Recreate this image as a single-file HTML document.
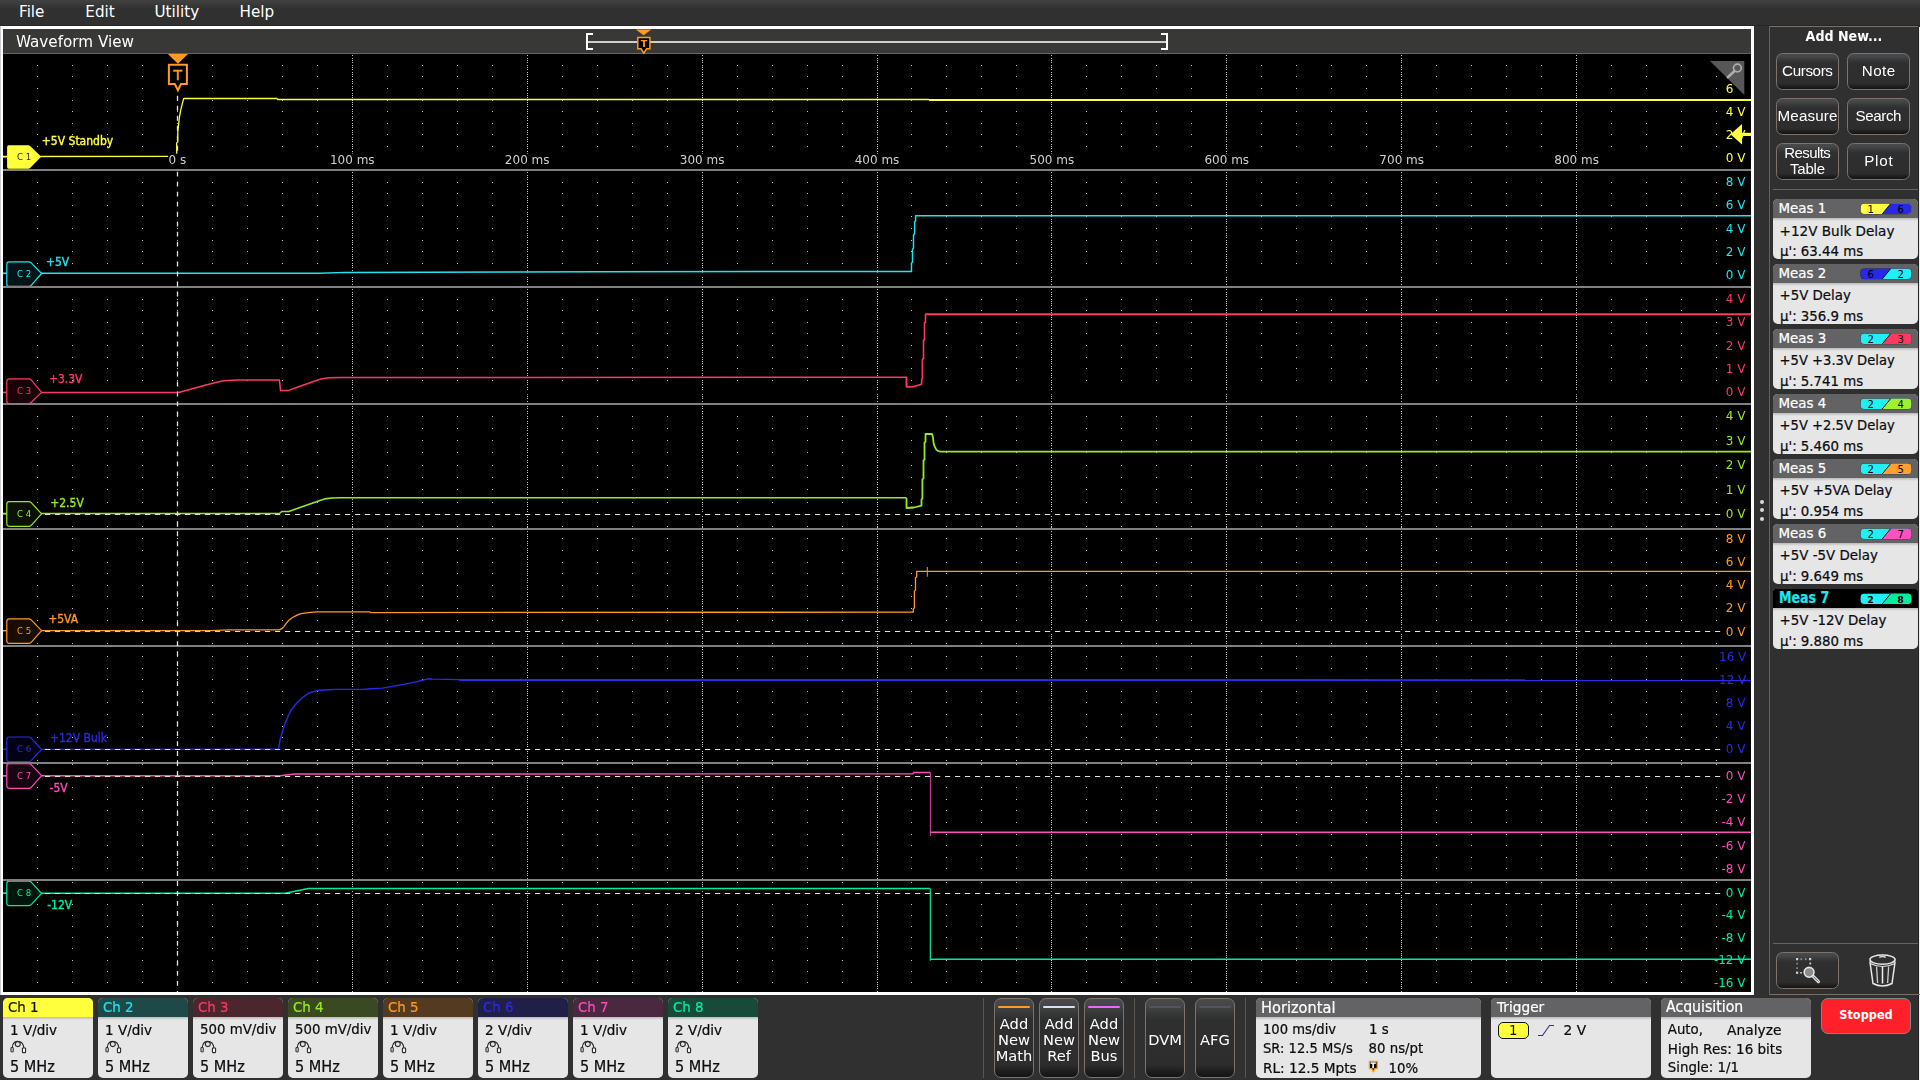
<!DOCTYPE html>
<html lang="en"><head><meta charset="utf-8"><title>Waveform View</title>
<style>

html,body{margin:0;padding:0}
body{width:1920px;height:1080px;overflow:hidden;background:#303030;font-family:"DejaVu Sans","Liberation Sans",sans-serif;position:relative;color:#fff}
.a{position:absolute}
.t{position:absolute;white-space:pre;line-height:1}
#menubar{left:0;top:0;width:1920px;height:26px;background:linear-gradient(#414141 0,#3e3e3e 2px,#363636 6px,#303030 9.5px,#303030 25px,#262626 25px,#262626 26px)}
#menubar span{position:absolute;top:3px;font-size:15.2px;line-height:18px;color:#fff}
#wvframe{left:1px;top:26px;width:1753px;height:969px;background:#fff}
#wvedge{left:0;top:26px;width:1px;height:969px;background:#c9cdd1}
#wvtitle{left:3px;top:29px;width:1748px;height:24px;background:#383837}
#wvtline{left:3px;top:53px;width:1748px;height:1px;background:#63666a}
#plot{left:3px;top:54px;width:1748px;height:938px;background:#000}
.btn{position:absolute;box-sizing:border-box;border:1px solid #7d726c;border-radius:6.5px;background:linear-gradient(#494a4c 0,#454648 8%,#38393a 17%,#2f2f2f 26%,#2d2d2d 84%,#1c1c1c 94%,#131313 100%);color:#fff;text-align:center}
.badge{position:absolute;border-radius:5px;background:#e6e6e6;overflow:hidden;color:#0c0c10}
.badge .h{position:absolute;left:0;top:0;right:0;height:19px}
.badge .sh{position:absolute;left:0;right:0;top:19px;height:3px;background:linear-gradient(#b9b9b9,#e6e6e6)}
.badge .t{font-size:13.33px;-webkit-text-stroke:0.22px currentColor;transform:scaleY(1.07);transform-origin:0 78%}

</style></head><body>
<div id="menubar" class="a"><span style="left:19px">File</span><span style="left:85.3px">Edit</span><span style="left:154.5px">Utility</span><span style="left:239.5px">Help</span></div>
<div id="wvframe" class="a"></div><div id="wvedge" class="a"></div>
<div id="wvtitle" class="a"></div><div id="wvtline" class="a"></div>
<div class="t" style="left:16px;top:33px;font-size:15.2px;line-height:18px;color:#fff;will-change:transform">Waveform View</div>
<div id="plot" class="a"></div>
<svg class="a" style="left:0;top:0;will-change:transform" width="1920" height="1080" viewBox="0 0 1920 1080">
<defs><clipPath id="pc"><rect x="3" y="54" width="1748" height="938"/></clipPath></defs>
<g clip-path="url(#pc)">
<g stroke="#c6c6c6" stroke-width="1" shape-rendering="crispEdges" fill="none">
<defs><path id="dr" d="M37,0h1M72,0h1M107,0h1M142,0h1M177,0h1M212,0h1M247,0h1M282,0h1M317,0h1M352,0h1M387,0h1M422,0h1M457,0h1M492,0h1M527,0h1M562,0h1M597,0h1M632,0h1M667,0h1M702,0h1M737,0h1M772,0h1M807,0h1M842,0h1M877,0h1M911,0h1M946,0h1M981,0h1M1016,0h1M1051,0h1M1086,0h1M1121,0h1M1156,0h1M1191,0h1M1226,0h1M1261,0h1M1296,0h1M1331,0h1M1366,0h1M1401,0h1M1436,0h1M1471,0h1M1506,0h1M1541,0h1M1576,0h1M1611,0h1M1646,0h1M1681,0h1M1716,0h1"/></defs>
<use href="#dr" y="65.5"/>
<use href="#dr" y="76.5"/>
<use href="#dr" y="88.5"/>
<use href="#dr" y="100.5"/>
<use href="#dr" y="111.5"/>
<use href="#dr" y="123.5"/>
<use href="#dr" y="134.5"/>
<use href="#dr" y="146.5"/>
<use href="#dr" y="182.5"/>
<use href="#dr" y="193.5"/>
<use href="#dr" y="205.5"/>
<use href="#dr" y="216.5"/>
<use href="#dr" y="228.5"/>
<use href="#dr" y="240.5"/>
<use href="#dr" y="251.5"/>
<use href="#dr" y="263.5"/>
<use href="#dr" y="299.5"/>
<use href="#dr" y="310.5"/>
<use href="#dr" y="322.5"/>
<use href="#dr" y="333.5"/>
<use href="#dr" y="345.5"/>
<use href="#dr" y="357.5"/>
<use href="#dr" y="368.5"/>
<use href="#dr" y="380.5"/>
<use href="#dr" y="416.5"/>
<use href="#dr" y="428.5"/>
<use href="#dr" y="440.5"/>
<use href="#dr" y="452.5"/>
<use href="#dr" y="465.5"/>
<use href="#dr" y="477.5"/>
<use href="#dr" y="489.5"/>
<use href="#dr" y="502.5"/>
<use href="#dr" y="526.5"/>
<use href="#dr" y="538.5"/>
<use href="#dr" y="550.5"/>
<use href="#dr" y="562.5"/>
<use href="#dr" y="573.5"/>
<use href="#dr" y="585.5"/>
<use href="#dr" y="596.5"/>
<use href="#dr" y="608.5"/>
<use href="#dr" y="620.5"/>
<use href="#dr" y="643.5"/>
<use href="#dr" y="656.5"/>
<use href="#dr" y="668.5"/>
<use href="#dr" y="679.5"/>
<use href="#dr" y="691.5"/>
<use href="#dr" y="702.5"/>
<use href="#dr" y="714.5"/>
<use href="#dr" y="726.5"/>
<use href="#dr" y="737.5"/>
<use href="#dr" y="760.5"/>
<use href="#dr" y="764.5"/>
<use href="#dr" y="787.5"/>
<use href="#dr" y="799.5"/>
<use href="#dr" y="810.5"/>
<use href="#dr" y="822.5"/>
<use href="#dr" y="834.5"/>
<use href="#dr" y="845.5"/>
<use href="#dr" y="857.5"/>
<use href="#dr" y="868.5"/>
<use href="#dr" y="882.5"/>
<use href="#dr" y="904.5"/>
<use href="#dr" y="915.5"/>
<use href="#dr" y="926.5"/>
<use href="#dr" y="937.5"/>
<use href="#dr" y="948.5"/>
<use href="#dr" y="960.5"/>
<use href="#dr" y="971.5"/>
<use href="#dr" y="982.5"/>
<defs><path id="mv0" d="M0,55v1M0,58v1M0,60v1M0,62v1M0,65v1M0,67v1M0,69v1M0,72v1M0,74v1M0,76v1M0,79v1M0,81v1M0,83v1M0,86v1M0,88v1M0,90v1M0,93v1M0,95v1M0,97v1M0,100v1M0,102v1M0,104v1M0,106v1M0,109v1M0,111v1M0,113v1M0,116v1M0,118v1M0,120v1M0,123v1M0,125v1M0,127v1M0,130v1M0,132v1M0,134v1M0,137v1M0,139v1M0,141v1M0,144v1M0,146v1M0,148v1M0,151v1M0,153v1M0,155v1M0,158v1M0,160v1M0,162v1M0,164v1M0,167v1M0,169v1"/></defs>
<use href="#mv0" x="352.5"/>
<use href="#mv0" x="527.5"/>
<use href="#mv0" x="702.5"/>
<use href="#mv0" x="877.5"/>
<use href="#mv0" x="1051.5"/>
<use href="#mv0" x="1226.5"/>
<use href="#mv0" x="1401.5"/>
<use href="#mv0" x="1576.5"/>
<defs><path id="mv1" d="M0,170v1M0,172v1M0,175v1M0,177v1M0,179v1M0,182v1M0,184v1M0,186v1M0,189v1M0,191v1M0,193v1M0,196v1M0,198v1M0,200v1M0,202v1M0,205v1M0,207v1M0,209v1M0,212v1M0,214v1M0,216v1M0,219v1M0,221v1M0,223v1M0,226v1M0,228v1M0,230v1M0,233v1M0,235v1M0,237v1M0,240v1M0,242v1M0,244v1M0,247v1M0,249v1M0,251v1M0,254v1M0,256v1M0,258v1M0,260v1M0,263v1M0,265v1M0,267v1M0,270v1M0,272v1M0,274v1M0,277v1M0,279v1M0,281v1M0,284v1M0,286v1"/></defs>
<use href="#mv1" x="352.5"/>
<use href="#mv1" x="527.5"/>
<use href="#mv1" x="702.5"/>
<use href="#mv1" x="877.5"/>
<use href="#mv1" x="1051.5"/>
<use href="#mv1" x="1226.5"/>
<use href="#mv1" x="1401.5"/>
<use href="#mv1" x="1576.5"/>
<defs><path id="mv2" d="M0,287v1M0,289v1M0,292v1M0,294v1M0,296v1M0,299v1M0,301v1M0,303v1M0,305v1M0,308v1M0,310v1M0,312v1M0,315v1M0,317v1M0,319v1M0,322v1M0,324v1M0,326v1M0,329v1M0,331v1M0,333v1M0,336v1M0,338v1M0,340v1M0,343v1M0,345v1M0,347v1M0,350v1M0,352v1M0,354v1M0,357v1M0,359v1M0,361v1M0,363v1M0,366v1M0,368v1M0,370v1M0,373v1M0,375v1M0,377v1M0,380v1M0,382v1M0,384v1M0,387v1M0,389v1M0,391v1M0,394v1M0,396v1M0,398v1M0,401v1M0,403v1"/></defs>
<use href="#mv2" x="352.5"/>
<use href="#mv2" x="527.5"/>
<use href="#mv2" x="702.5"/>
<use href="#mv2" x="877.5"/>
<use href="#mv2" x="1051.5"/>
<use href="#mv2" x="1226.5"/>
<use href="#mv2" x="1401.5"/>
<use href="#mv2" x="1576.5"/>
<defs><path id="mv3" d="M0,403v1M0,406v1M0,408v1M0,411v1M0,413v1M0,416v1M0,418v1M0,421v1M0,423v1M0,426v1M0,428v1M0,430v1M0,433v1M0,435v1M0,438v1M0,440v1M0,443v1M0,445v1M0,448v1M0,450v1M0,452v1M0,455v1M0,457v1M0,460v1M0,462v1M0,465v1M0,467v1M0,470v1M0,472v1M0,475v1M0,477v1M0,479v1M0,482v1M0,484v1M0,487v1M0,489v1M0,492v1M0,494v1M0,497v1M0,499v1M0,502v1M0,504v1M0,506v1M0,509v1M0,511v1M0,514v1M0,516v1M0,519v1M0,521v1M0,524v1M0,526v1"/></defs>
<use href="#mv3" x="352.5"/>
<use href="#mv3" x="527.5"/>
<use href="#mv3" x="702.5"/>
<use href="#mv3" x="877.5"/>
<use href="#mv3" x="1051.5"/>
<use href="#mv3" x="1226.5"/>
<use href="#mv3" x="1401.5"/>
<use href="#mv3" x="1576.5"/>
<defs><path id="mv4" d="M0,527v1M0,529v1M0,531v1M0,534v1M0,536v1M0,538v1M0,541v1M0,543v1M0,545v1M0,548v1M0,550v1M0,552v1M0,555v1M0,557v1M0,559v1M0,562v1M0,564v1M0,566v1M0,569v1M0,571v1M0,573v1M0,575v1M0,578v1M0,580v1M0,582v1M0,585v1M0,587v1M0,589v1M0,592v1M0,594v1M0,596v1M0,599v1M0,601v1M0,603v1M0,606v1M0,608v1M0,610v1M0,613v1M0,615v1M0,617v1M0,620v1M0,622v1M0,624v1M0,627v1M0,629v1M0,631v1M0,634v1M0,636v1M0,638v1M0,641v1M0,643v1"/></defs>
<use href="#mv4" x="352.5"/>
<use href="#mv4" x="527.5"/>
<use href="#mv4" x="702.5"/>
<use href="#mv4" x="877.5"/>
<use href="#mv4" x="1051.5"/>
<use href="#mv4" x="1226.5"/>
<use href="#mv4" x="1401.5"/>
<use href="#mv4" x="1576.5"/>
<defs><path id="mv5" d="M0,645v1M0,647v1M0,649v1M0,652v1M0,654v1M0,656v1M0,658v1M0,661v1M0,663v1M0,665v1M0,668v1M0,670v1M0,672v1M0,675v1M0,677v1M0,679v1M0,682v1M0,684v1M0,686v1M0,689v1M0,691v1M0,693v1M0,695v1M0,698v1M0,700v1M0,702v1M0,705v1M0,707v1M0,709v1M0,712v1M0,714v1M0,716v1M0,719v1M0,721v1M0,723v1M0,726v1M0,728v1M0,730v1M0,732v1M0,735v1M0,737v1M0,739v1M0,742v1M0,744v1M0,746v1M0,749v1M0,751v1M0,753v1M0,756v1M0,758v1M0,760v1M0,763v1"/></defs>
<use href="#mv5" x="352.5"/>
<use href="#mv5" x="527.5"/>
<use href="#mv5" x="702.5"/>
<use href="#mv5" x="877.5"/>
<use href="#mv5" x="1051.5"/>
<use href="#mv5" x="1226.5"/>
<use href="#mv5" x="1401.5"/>
<use href="#mv5" x="1576.5"/>
<defs><path id="mv6" d="M0,764v1M0,766v1M0,768v1M0,771v1M0,773v1M0,775v1M0,778v1M0,780v1M0,782v1M0,785v1M0,787v1M0,789v1M0,792v1M0,794v1M0,796v1M0,799v1M0,801v1M0,803v1M0,806v1M0,808v1M0,810v1M0,813v1M0,815v1M0,817v1M0,820v1M0,822v1M0,824v1M0,827v1M0,829v1M0,831v1M0,834v1M0,836v1M0,838v1M0,841v1M0,843v1M0,845v1M0,848v1M0,850v1M0,852v1M0,855v1M0,857v1M0,859v1M0,861v1M0,864v1M0,866v1M0,868v1M0,871v1M0,873v1M0,875v1M0,878v1M0,880v1"/></defs>
<use href="#mv6" x="352.5"/>
<use href="#mv6" x="527.5"/>
<use href="#mv6" x="702.5"/>
<use href="#mv6" x="877.5"/>
<use href="#mv6" x="1051.5"/>
<use href="#mv6" x="1226.5"/>
<use href="#mv6" x="1401.5"/>
<use href="#mv6" x="1576.5"/>
<defs><path id="mv7" d="M0,882v1M0,884v1M0,886v1M0,888v1M0,891v1M0,893v1M0,895v1M0,897v1M0,900v1M0,902v1M0,904v1M0,906v1M0,908v1M0,911v1M0,913v1M0,915v1M0,917v1M0,920v1M0,922v1M0,924v1M0,926v1M0,928v1M0,931v1M0,933v1M0,935v1M0,937v1M0,940v1M0,942v1M0,944v1M0,946v1M0,948v1M0,951v1M0,953v1M0,955v1M0,957v1M0,960v1M0,962v1M0,964v1M0,966v1M0,968v1M0,971v1M0,973v1M0,975v1M0,977v1M0,979v1M0,982v1M0,984v1M0,986v1M0,988v1M0,991v1"/></defs>
<use href="#mv7" x="352.5"/>
<use href="#mv7" x="527.5"/>
<use href="#mv7" x="702.5"/>
<use href="#mv7" x="877.5"/>
<use href="#mv7" x="1051.5"/>
<use href="#mv7" x="1226.5"/>
<use href="#mv7" x="1401.5"/>
<use href="#mv7" x="1576.5"/>
</g>
<rect x="3" y="272.6" width="1748" height="4.4" fill="#000"/>
<rect x="3" y="390.3" width="1748" height="3.9" fill="#000"/>
<rect x="3" y="512.9" width="1748" height="3" fill="#000"/>
<rect x="3" y="629.9" width="1748" height="3" fill="#000"/>
<rect x="3" y="747.9" width="1748" height="3" fill="#000"/>
<rect x="3" y="774.9" width="1748" height="3" fill="#000"/>
<rect x="3" y="891.9" width="1748" height="3" fill="#000"/>
<text x="1725.8" y="92.9" font-family='"DejaVu Sans","Liberation Sans",sans-serif' font-size="12" fill="#ffff3c">6</text>
<rect x="1722.3" y="105.1" width="24.2" height="13" fill="#000"/>
<text x="1745.5" y="116.0" font-family='"DejaVu Sans","Liberation Sans",sans-serif' font-size="12" fill="#ffff3c" text-anchor="end" xml:space="preserve">4 V</text>
<rect x="1722.3" y="128.3" width="24.2" height="13" fill="#000"/>
<text x="1745.5" y="139.2" font-family='"DejaVu Sans","Liberation Sans",sans-serif' font-size="12" fill="#ffff3c" text-anchor="end" xml:space="preserve">2 V</text>
<rect x="1722.3" y="151.1" width="24.2" height="13" fill="#000"/>
<text x="1745.5" y="162.0" font-family='"DejaVu Sans","Liberation Sans",sans-serif' font-size="12" fill="#ffff3c" text-anchor="end" xml:space="preserve">0 V</text>
<rect x="1722.3" y="175.1" width="24.2" height="13" fill="#000"/>
<text x="1745.5" y="186.0" font-family='"DejaVu Sans","Liberation Sans",sans-serif' font-size="12" fill="#20e4f0" text-anchor="end" xml:space="preserve">8 V</text>
<rect x="1722.3" y="198.1" width="24.2" height="13" fill="#000"/>
<text x="1745.5" y="209.0" font-family='"DejaVu Sans","Liberation Sans",sans-serif' font-size="12" fill="#20e4f0" text-anchor="end" xml:space="preserve">6 V</text>
<rect x="1722.3" y="221.7" width="24.2" height="13" fill="#000"/>
<text x="1745.5" y="232.6" font-family='"DejaVu Sans","Liberation Sans",sans-serif' font-size="12" fill="#20e4f0" text-anchor="end" xml:space="preserve">4 V</text>
<rect x="1722.3" y="244.9" width="24.2" height="13" fill="#000"/>
<text x="1745.5" y="255.8" font-family='"DejaVu Sans","Liberation Sans",sans-serif' font-size="12" fill="#20e4f0" text-anchor="end" xml:space="preserve">2 V</text>
<rect x="1722.3" y="267.9" width="24.2" height="13" fill="#000"/>
<text x="1745.5" y="278.8" font-family='"DejaVu Sans","Liberation Sans",sans-serif' font-size="12" fill="#20e4f0" text-anchor="end" xml:space="preserve">0 V</text>
<rect x="1722.3" y="291.9" width="24.2" height="13" fill="#000"/>
<text x="1745.5" y="302.8" font-family='"DejaVu Sans","Liberation Sans",sans-serif' font-size="12" fill="#ff3862" text-anchor="end" xml:space="preserve">4 V</text>
<rect x="1722.3" y="315.3" width="24.2" height="13" fill="#000"/>
<text x="1745.5" y="326.2" font-family='"DejaVu Sans","Liberation Sans",sans-serif' font-size="12" fill="#ff3862" text-anchor="end" xml:space="preserve">3 V</text>
<rect x="1722.3" y="338.9" width="24.2" height="13" fill="#000"/>
<text x="1745.5" y="349.8" font-family='"DejaVu Sans","Liberation Sans",sans-serif' font-size="12" fill="#ff3862" text-anchor="end" xml:space="preserve">2 V</text>
<rect x="1722.3" y="361.9" width="24.2" height="13" fill="#000"/>
<text x="1745.5" y="372.8" font-family='"DejaVu Sans","Liberation Sans",sans-serif' font-size="12" fill="#ff3862" text-anchor="end" xml:space="preserve">1 V</text>
<rect x="1722.3" y="385.1" width="24.2" height="13" fill="#000"/>
<text x="1745.5" y="396.0" font-family='"DejaVu Sans","Liberation Sans",sans-serif' font-size="12" fill="#ff3862" text-anchor="end" xml:space="preserve">0 V</text>
<rect x="1722.3" y="409.1" width="24.2" height="13" fill="#000"/>
<text x="1745.5" y="420.0" font-family='"DejaVu Sans","Liberation Sans",sans-serif' font-size="12" fill="#98ea20" text-anchor="end" xml:space="preserve">4 V</text>
<rect x="1722.3" y="433.7" width="24.2" height="13" fill="#000"/>
<text x="1745.5" y="444.6" font-family='"DejaVu Sans","Liberation Sans",sans-serif' font-size="12" fill="#98ea20" text-anchor="end" xml:space="preserve">3 V</text>
<rect x="1722.3" y="458.1" width="24.2" height="13" fill="#000"/>
<text x="1745.5" y="469.0" font-family='"DejaVu Sans","Liberation Sans",sans-serif' font-size="12" fill="#98ea20" text-anchor="end" xml:space="preserve">2 V</text>
<rect x="1722.3" y="482.7" width="24.2" height="13" fill="#000"/>
<text x="1745.5" y="493.6" font-family='"DejaVu Sans","Liberation Sans",sans-serif' font-size="12" fill="#98ea20" text-anchor="end" xml:space="preserve">1 V</text>
<rect x="1722.3" y="507.1" width="24.2" height="13" fill="#000"/>
<text x="1745.5" y="518.0" font-family='"DejaVu Sans","Liberation Sans",sans-serif' font-size="12" fill="#98ea20" text-anchor="end" xml:space="preserve">0 V</text>
<rect x="1722.3" y="531.7" width="24.2" height="13" fill="#000"/>
<text x="1745.5" y="542.6" font-family='"DejaVu Sans","Liberation Sans",sans-serif' font-size="12" fill="#ff9a22" text-anchor="end" xml:space="preserve">8 V</text>
<rect x="1722.3" y="554.9" width="24.2" height="13" fill="#000"/>
<text x="1745.5" y="565.8" font-family='"DejaVu Sans","Liberation Sans",sans-serif' font-size="12" fill="#ff9a22" text-anchor="end" xml:space="preserve">6 V</text>
<rect x="1722.3" y="578.1" width="24.2" height="13" fill="#000"/>
<text x="1745.5" y="589.0" font-family='"DejaVu Sans","Liberation Sans",sans-serif' font-size="12" fill="#ff9a22" text-anchor="end" xml:space="preserve">4 V</text>
<rect x="1722.3" y="601.3" width="24.2" height="13" fill="#000"/>
<text x="1745.5" y="612.2" font-family='"DejaVu Sans","Liberation Sans",sans-serif' font-size="12" fill="#ff9a22" text-anchor="end" xml:space="preserve">2 V</text>
<rect x="1722.3" y="624.7" width="24.2" height="13" fill="#000"/>
<text x="1745.5" y="635.6" font-family='"DejaVu Sans","Liberation Sans",sans-serif' font-size="12" fill="#ff9a22" text-anchor="end" xml:space="preserve">0 V</text>
<rect x="1715.5" y="649.9" width="31.8" height="13" fill="#000"/>
<text x="1746.3" y="660.8" font-family='"DejaVu Sans","Liberation Sans",sans-serif' font-size="12" fill="#2a2ae8" text-anchor="end" xml:space="preserve">16 V</text>
<rect x="1715.5" y="673.1" width="31.8" height="13" fill="#000"/>
<text x="1746.3" y="684.0" font-family='"DejaVu Sans","Liberation Sans",sans-serif' font-size="12" fill="#2a2ae8" text-anchor="end" xml:space="preserve">12 V</text>
<rect x="1722.3" y="696.1" width="24.2" height="13" fill="#000"/>
<text x="1745.5" y="707.0" font-family='"DejaVu Sans","Liberation Sans",sans-serif' font-size="12" fill="#2a2ae8" text-anchor="end" xml:space="preserve">8 V</text>
<rect x="1722.3" y="719.3" width="24.2" height="13" fill="#000"/>
<text x="1745.5" y="730.2" font-family='"DejaVu Sans","Liberation Sans",sans-serif' font-size="12" fill="#2a2ae8" text-anchor="end" xml:space="preserve">4 V</text>
<rect x="1722.3" y="742.5" width="24.2" height="13" fill="#000"/>
<text x="1745.5" y="753.4" font-family='"DejaVu Sans","Liberation Sans",sans-serif' font-size="12" fill="#2a2ae8" text-anchor="end" xml:space="preserve">0 V</text>
<rect x="1722.3" y="769.1" width="24.2" height="13" fill="#000"/>
<text x="1745.5" y="780.0" font-family='"DejaVu Sans","Liberation Sans",sans-serif' font-size="12" fill="#ff4cba" text-anchor="end" xml:space="preserve">0 V</text>
<rect x="1718.0" y="792.3" width="28.5" height="13" fill="#000"/>
<text x="1745.5" y="803.2" font-family='"DejaVu Sans","Liberation Sans",sans-serif' font-size="12" fill="#ff4cba" text-anchor="end" xml:space="preserve">-2 V</text>
<rect x="1718.0" y="815.5" width="28.5" height="13" fill="#000"/>
<text x="1745.5" y="826.4" font-family='"DejaVu Sans","Liberation Sans",sans-serif' font-size="12" fill="#ff4cba" text-anchor="end" xml:space="preserve">-4 V</text>
<rect x="1718.0" y="838.7" width="28.5" height="13" fill="#000"/>
<text x="1745.5" y="849.6" font-family='"DejaVu Sans","Liberation Sans",sans-serif' font-size="12" fill="#ff4cba" text-anchor="end" xml:space="preserve">-6 V</text>
<rect x="1718.0" y="861.9" width="28.5" height="13" fill="#000"/>
<text x="1745.5" y="872.8" font-family='"DejaVu Sans","Liberation Sans",sans-serif' font-size="12" fill="#ff4cba" text-anchor="end" xml:space="preserve">-8 V</text>
<rect x="1722.3" y="886.1" width="24.2" height="13" fill="#000"/>
<text x="1745.5" y="897.0" font-family='"DejaVu Sans","Liberation Sans",sans-serif' font-size="12" fill="#00ee9c" text-anchor="end" xml:space="preserve">0 V</text>
<rect x="1718.0" y="908.5" width="28.5" height="13" fill="#000"/>
<text x="1745.5" y="919.4" font-family='"DejaVu Sans","Liberation Sans",sans-serif' font-size="12" fill="#00ee9c" text-anchor="end" xml:space="preserve">-4 V</text>
<rect x="1718.0" y="930.9" width="28.5" height="13" fill="#000"/>
<text x="1745.5" y="941.8" font-family='"DejaVu Sans","Liberation Sans",sans-serif' font-size="12" fill="#00ee9c" text-anchor="end" xml:space="preserve">-8 V</text>
<rect x="1710.4" y="953.3" width="36.1" height="13" fill="#000"/>
<text x="1745.5" y="964.2" font-family='"DejaVu Sans","Liberation Sans",sans-serif' font-size="12" fill="#00ee9c" text-anchor="end" xml:space="preserve">-12 V</text>
<rect x="1710.4" y="975.7" width="36.1" height="13" fill="#000"/>
<text x="1745.5" y="986.6" font-family='"DejaVu Sans","Liberation Sans",sans-serif' font-size="12" fill="#00ee9c" text-anchor="end" xml:space="preserve">-16 V</text>
<polyline points="3.0,156.5 175.0,156.4 176.7,154.0 176.7,142.9 177.8,141.8 177.8,131.8 178.7,124.0 179.4,117.3 180.6,110.7 181.7,106.2 182.8,101.8 183.7,98.5 277.0,98.5 277.6,99.5 929.0,99.5" fill="none" stroke="#ffff3c" stroke-width="1.3" stroke-linejoin="round" />
<polyline points="929.0,99.9 1751.0,99.9" fill="none" stroke="#ffff3c" stroke-width="2" stroke-linejoin="round" />
<polyline points="3.0,273.3 320.0,273.3 345.0,272.4 600.0,271.8 911.5,271.4 911.5,263.3 912.5,262.0 912.5,249.2 913.5,247.9 913.5,235.0 914.6,233.7 914.6,222.0 915.6,220.8 915.6,215.7 1751.0,215.7" fill="none" stroke="#20e4f0" stroke-width="1.45" stroke-linejoin="round" />
<polyline points="3.0,392.5 178.7,392.5 185.0,390.7 195.0,388.0 205.0,385.3 215.0,382.7 222.0,381.1 228.0,380.4 236.0,380.1 279.4,380.0 279.9,384.0 280.5,390.4 288.7,390.4 300.0,386.3 310.0,382.7 321.0,378.9 329.0,377.8 340.0,377.5 906.5,377.3 906.5,387.0" fill="none" stroke="#ff3862" stroke-width="1.5" stroke-linejoin="round" />
<polyline points="906.5,377.3 906.5,387.0 914.0,386.6 921.5,384.3 921.9,378.7 922.4,378.2 922.4,359.3 923.5,358.3 923.5,340.3 924.5,339.8 924.5,322.7 925.5,322.2 925.5,314.2" fill="none" stroke="#ff3862" stroke-width="1.6" stroke-linejoin="round" />
<polyline points="925.3,314.3 1751.0,314.3" fill="none" stroke="#ff3862" stroke-width="2" stroke-linejoin="round" />
<polyline points="3.0,513.5 279.4,513.5 281.9,511.5 288.7,511.5 300.0,507.6 310.0,504.1 320.0,500.6 326.2,498.6 333.0,498.0 340.0,497.8 906.5,497.8" fill="none" stroke="#98ea20" stroke-width="1.6" stroke-linejoin="round" />
<polyline points="906.5,497.8 906.5,508.0 914.0,507.5 921.5,505.6 921.5,499.6 922.4,498.7 922.4,479.3 923.5,478.3 923.5,460.3 924.5,459.8 924.5,442.7 925.5,441.8 925.5,434.0 932.1,433.9 933.0,437.6 933.5,442.2 934.4,445.9 935.4,447.8 936.3,449.6 938.1,451.0 940.5,451.6 1751.0,451.6" fill="none" stroke="#98ea20" stroke-width="1.8" stroke-linejoin="round" />
<polyline points="3.0,630.6 210.0,630.6 230.0,629.8 279.4,629.8 281.9,628.7 283.7,626.9 285.6,624.4 287.5,621.9 289.4,619.7 292.5,617.5 296.2,615.6 300.0,613.8 306.2,612.8 316.2,611.9 370.0,611.9 370.6,612.6 913.3,612.1 913.3,608.9 914.4,607.8 914.4,591.1 915.5,590.0 915.5,577.8 916.7,576.7 916.7,571.3 1751.0,571.4" fill="none" stroke="#ff9a22" stroke-width="1.3" stroke-linejoin="round" />
<polyline points="927.3,567.0 927.3,576.7" fill="none" stroke="#ff9a22" stroke-width="1" stroke-linejoin="round" />
<polyline points="3.0,749.4 278.5,749.3 280.0,740.0 282.5,731.2 285.0,723.7 288.1,716.2 291.2,710.0 296.2,703.7 302.5,697.5 308.7,693.1 315.0,691.2 318.7,690.2 330.0,689.7 335.0,689.4 363.7,689.4 370.0,688.7 382.5,688.1 391.2,686.6 403.7,684.4 416.2,681.9 427.5,679.0 430.0,678.7 432.5,679.1 460.0,679.6" fill="none" stroke="#2a2ae8" stroke-width="1.4" stroke-linejoin="round" />
<polyline points="459.0,679.9 1751.0,680.2" fill="none" stroke="#2a2ae8" stroke-width="2" stroke-linejoin="round" />
<polyline points="3.0,775.7 280.0,775.7 295.0,774.0 913.0,773.9 913.5,772.5 930.4,772.5" fill="none" stroke="#ff4cba" stroke-width="1.4" stroke-linejoin="round" />
<polyline points="930.4,772.5 930.4,835.9" fill="none" stroke="#ff4cba" stroke-width="1.1" stroke-linejoin="round" stroke-opacity="0.8"/>
<polyline points="930.4,832.3 1751.0,832.3" fill="none" stroke="#ff4cba" stroke-width="1.5" stroke-linejoin="round" />
<polyline points="3.0,893.3 285.4,893.3 296.0,891.0 308.3,888.5 930.1,888.5" fill="none" stroke="#00ee9c" stroke-width="1.4" stroke-linejoin="round" />
<polyline points="930.3,888.5 930.3,960.8" fill="none" stroke="#00ee9c" stroke-width="1.2" stroke-linejoin="round" />
<polyline points="930.3,959.3 1751.0,959.3" fill="none" stroke="#00ee9c" stroke-width="1.5" stroke-linejoin="round" />
<line x1="45" y1="514.5" x2="1722" y2="514.5" stroke="#e2dfd2" stroke-width="1.05" stroke-dasharray="5.2 4.8"/>
<line x1="45" y1="631.4" x2="1722" y2="631.4" stroke="#e2dfd2" stroke-width="1.05" stroke-dasharray="5.2 4.8"/>
<line x1="45" y1="749.5" x2="1722" y2="749.5" stroke="#e2dfd2" stroke-width="1.05" stroke-dasharray="5.2 4.8"/>
<line x1="45" y1="776.4" x2="1722" y2="776.4" stroke="#e2dfd2" stroke-width="1.05" stroke-dasharray="5.2 4.8"/>
<line x1="45" y1="893.4" x2="1722" y2="893.4" stroke="#e2dfd2" stroke-width="1.05" stroke-dasharray="5.2 4.8"/>
<rect x="3" y="169" width="1748" height="2" fill="#808080" shape-rendering="crispEdges"/>
<rect x="3" y="286" width="1748" height="2" fill="#808080" shape-rendering="crispEdges"/>
<rect x="3" y="403" width="1748" height="2" fill="#808080" shape-rendering="crispEdges"/>
<rect x="3" y="528" width="1748" height="2" fill="#808080" shape-rendering="crispEdges"/>
<rect x="3" y="645" width="1748" height="2" fill="#808080" shape-rendering="crispEdges"/>
<rect x="3" y="762" width="1748" height="2" fill="#808080" shape-rendering="crispEdges"/>
<rect x="3" y="879" width="1748" height="2" fill="#808080" shape-rendering="crispEdges"/>
<clipPath id="sc1"><rect x="3" y="54" width="60" height="115"/></clipPath><g clip-path="url(#sc1)">
<path d="M8.7,145.3 L28.3,145.3 Q29.3,145.3 30.1,146.10000000000002 L41.2,156.8 L30.1,167.89999999999998 Q29.3,168.7 28.3,168.7 L8.7,168.7 Q7.1,168.7 7.1,167.1 L7.1,146.9 Q7.1,145.3 8.7,145.3 Z" fill="#ffff3c"/>
<line x1="3" y1="156.8" x2="6.2" y2="156.8" stroke="#ffff3c" stroke-width="1.3"/>
<text x="24.1" y="160.0" font-family='"DejaVu Sans","Liberation Sans",sans-serif' font-size="8.6" text-anchor="middle" fill="#2c2c00" xml:space="preserve">C 1</text>
</g>
<clipPath id="sc2"><rect x="3" y="171" width="60" height="115"/></clipPath><g clip-path="url(#sc2)">
<path d="M9.3,261.8 L28.7,261.8 Q30.2,261.8 31.2,262.8 L41.6,273.5 L31.2,285.40000000000003 Q30.2,286.40000000000003 28.7,286.40000000000003 L9.3,286.40000000000003 Q6.8,286.40000000000003 6.8,283.90000000000003 L6.8,264.3 Q6.8,261.8 9.3,261.8 Z" fill="#021416" stroke="#20e4f0" stroke-width="1.2" stroke-linejoin="round"/>
<line x1="3" y1="273.5" x2="6.2" y2="273.5" stroke="#20e4f0" stroke-width="1.3"/>
<text x="24.1" y="277.1" font-family='"DejaVu Sans","Liberation Sans",sans-serif' font-size="8.6" text-anchor="middle" fill="#20e4f0" xml:space="preserve">C 2</text>
</g>
<clipPath id="sc3"><rect x="3" y="288" width="60" height="115"/></clipPath><g clip-path="url(#sc3)">
<path d="M9.3,378.9 L28.7,378.9 Q30.2,378.9 31.2,379.9 L41.6,392.4 L31.2,402.5 Q30.2,403.5 28.7,403.5 L9.3,403.5 Q6.8,403.5 6.8,401.0 L6.8,381.4 Q6.8,378.9 9.3,378.9 Z" fill="#170308" stroke="#ff3862" stroke-width="1.2" stroke-linejoin="round"/>
<line x1="3" y1="392.4" x2="6.2" y2="392.4" stroke="#ff3862" stroke-width="1.3"/>
<text x="24.1" y="394.2" font-family='"DejaVu Sans","Liberation Sans",sans-serif' font-size="8.6" text-anchor="middle" fill="#ff3862" xml:space="preserve">C 3</text>
</g>
<clipPath id="sc4"><rect x="3" y="405" width="60" height="123"/></clipPath><g clip-path="url(#sc4)">
<path d="M9.3,501.7 L28.7,501.7 Q30.2,501.7 31.2,502.7 L41.6,513.8 L31.2,525.3 Q30.2,526.3 28.7,526.3 L9.3,526.3 Q6.8,526.3 6.8,523.8 L6.8,504.2 Q6.8,501.7 9.3,501.7 Z" fill="#0b1002" stroke="#98ea20" stroke-width="1.2" stroke-linejoin="round"/>
<line x1="3" y1="513.8" x2="6.2" y2="513.8" stroke="#98ea20" stroke-width="1.3"/>
<text x="24.1" y="517.0" font-family='"DejaVu Sans","Liberation Sans",sans-serif' font-size="8.6" text-anchor="middle" fill="#98ea20" xml:space="preserve">C 4</text>
</g>
<clipPath id="sc5"><rect x="3" y="530" width="60" height="115"/></clipPath><g clip-path="url(#sc5)">
<path d="M9.3,618.8000000000001 L28.7,618.8000000000001 Q30.2,618.8000000000001 31.2,619.8000000000001 L41.6,630.6 L31.2,642.4 Q30.2,643.4 28.7,643.4 L9.3,643.4 Q6.8,643.4 6.8,640.9 L6.8,621.3000000000001 Q6.8,618.8000000000001 9.3,618.8000000000001 Z" fill="#170d02" stroke="#ff9a22" stroke-width="1.2" stroke-linejoin="round"/>
<line x1="3" y1="630.6" x2="6.2" y2="630.6" stroke="#ff9a22" stroke-width="1.3"/>
<text x="24.1" y="634.1" font-family='"DejaVu Sans","Liberation Sans",sans-serif' font-size="8.6" text-anchor="middle" fill="#ff9a22" xml:space="preserve">C 5</text>
</g>
<clipPath id="sc6"><rect x="3" y="647" width="60" height="115"/></clipPath><g clip-path="url(#sc6)">
<path d="M9.3,737.0 L28.7,737.0 Q30.2,737.0 31.2,738.0 L41.6,749.4 L31.2,760.5999999999999 Q30.2,761.5999999999999 28.7,761.5999999999999 L9.3,761.5999999999999 Q6.8,761.5999999999999 6.8,759.0999999999999 L6.8,739.5 Q6.8,737.0 9.3,737.0 Z" fill="#020214" stroke="#2a2ae8" stroke-width="1.2" stroke-linejoin="round"/>
<line x1="3" y1="749.4" x2="6.2" y2="749.4" stroke="#2a2ae8" stroke-width="1.3"/>
<text x="24.1" y="752.3" font-family='"DejaVu Sans","Liberation Sans",sans-serif' font-size="8.6" text-anchor="middle" fill="#2a2ae8" xml:space="preserve">C 6</text>
</g>
<clipPath id="sc7"><rect x="3" y="764" width="60" height="115"/></clipPath><g clip-path="url(#sc7)">
<path d="M9.3,763.7 L28.7,763.7 Q30.2,763.7 31.2,764.7 L41.6,775.7 L31.2,787.3 Q30.2,788.3 28.7,788.3 L9.3,788.3 Q6.8,788.3 6.8,785.8 L6.8,766.2 Q6.8,763.7 9.3,763.7 Z" fill="#16040f" stroke="#ff4cba" stroke-width="1.2" stroke-linejoin="round"/>
<line x1="3" y1="775.7" x2="6.2" y2="775.7" stroke="#ff4cba" stroke-width="1.3"/>
<text x="24.1" y="779.0" font-family='"DejaVu Sans","Liberation Sans",sans-serif' font-size="8.6" text-anchor="middle" fill="#ff4cba" xml:space="preserve">C 7</text>
</g>
<clipPath id="sc8"><rect x="3" y="881" width="60" height="111"/></clipPath><g clip-path="url(#sc8)">
<path d="M9.3,881.1 L28.7,881.1 Q30.2,881.1 31.2,882.1 L41.6,893.3 L31.2,904.6999999999999 Q30.2,905.6999999999999 28.7,905.6999999999999 L9.3,905.6999999999999 Q6.8,905.6999999999999 6.8,903.1999999999999 L6.8,883.6 Q6.8,881.1 9.3,881.1 Z" fill="#02150d" stroke="#00ee9c" stroke-width="1.2" stroke-linejoin="round"/>
<line x1="3" y1="893.3" x2="6.2" y2="893.3" stroke="#00ee9c" stroke-width="1.3"/>
<text x="24.1" y="896.4" font-family='"DejaVu Sans","Liberation Sans",sans-serif' font-size="8.6" text-anchor="middle" fill="#00ee9c" xml:space="preserve">C 8</text>
</g>
<rect x="3" y="169" width="60" height="2" fill="#808080" shape-rendering="crispEdges"/>
<rect x="3" y="286" width="60" height="2" fill="#808080" shape-rendering="crispEdges"/>
<rect x="3" y="403" width="60" height="2" fill="#808080" shape-rendering="crispEdges"/>
<rect x="3" y="528" width="60" height="2" fill="#808080" shape-rendering="crispEdges"/>
<rect x="3" y="645" width="60" height="2" fill="#808080" shape-rendering="crispEdges"/>
<rect x="3" y="762" width="60" height="2" fill="#808080" shape-rendering="crispEdges"/>
<rect x="3" y="879" width="60" height="2" fill="#808080" shape-rendering="crispEdges"/>
<line x1="177.5" y1="95.8" x2="177.5" y2="153" stroke="#e2e2e2" stroke-width="1.3" stroke-dasharray="4.9 5.1"/>
<line x1="177.5" y1="171.7" x2="177.5" y2="992" stroke="#e2e2e2" stroke-width="1.3" stroke-dasharray="4.9 5.09"/>
<text x="41.8" y="145" font-family='"DejaVu Sans Condensed","DejaVu Sans",sans-serif' font-size="12" fill="#ffff3c" stroke="#ffff3c" stroke-width="0.35" xml:space="preserve">+5V Standby</text>
<text x="45.9" y="265.9" font-family='"DejaVu Sans Condensed","DejaVu Sans",sans-serif' font-size="12" fill="#20e4f0" stroke="#20e4f0" stroke-width="0.35" xml:space="preserve">+5V</text>
<text x="48.9" y="382.8" font-family='"DejaVu Sans Condensed","DejaVu Sans",sans-serif' font-size="12" fill="#ff3862" stroke="#ff3862" stroke-width="0.35" xml:space="preserve">+3.3V</text>
<text x="50.2" y="506.9" font-family='"DejaVu Sans Condensed","DejaVu Sans",sans-serif' font-size="12" fill="#98ea20" stroke="#98ea20" stroke-width="0.35" xml:space="preserve">+2.5V</text>
<text x="48.2" y="622.7" font-family='"DejaVu Sans Condensed","DejaVu Sans",sans-serif' font-size="12" fill="#ff9a22" stroke="#ff9a22" stroke-width="0.35" xml:space="preserve">+5VA</text>
<text x="49.9" y="741.8" font-family='"DejaVu Sans Condensed","DejaVu Sans",sans-serif' font-size="12" fill="#2a2ae8" stroke="#2a2ae8" stroke-width="0.35" xml:space="preserve">+12V Bulk</text>
<text x="49.5" y="791.8" font-family='"DejaVu Sans Condensed","DejaVu Sans",sans-serif' font-size="12" fill="#ff4cba" stroke="#ff4cba" stroke-width="0.35" xml:space="preserve">-5V</text>
<text x="47.2" y="909.4" font-family='"DejaVu Sans Condensed","DejaVu Sans",sans-serif' font-size="12" fill="#00ee9c" stroke="#00ee9c" stroke-width="0.35" xml:space="preserve">-12V</text>
<rect x="168.2" y="153.6" width="18.4" height="15.4" fill="#000"/>
<text x="177.4" y="163.6" font-family='"DejaVu Sans","Liberation Sans",sans-serif' font-size="12" fill="#cfcfcf" text-anchor="middle" xml:space="preserve">0 s</text>
<rect x="329.7" y="153.6" width="45.2" height="15.4" fill="#000"/>
<text x="352.3" y="163.6" font-family='"DejaVu Sans","Liberation Sans",sans-serif' font-size="12" fill="#cfcfcf" text-anchor="middle" xml:space="preserve">100 ms</text>
<rect x="504.6" y="153.6" width="45.2" height="15.4" fill="#000"/>
<text x="527.2" y="163.6" font-family='"DejaVu Sans","Liberation Sans",sans-serif' font-size="12" fill="#cfcfcf" text-anchor="middle" xml:space="preserve">200 ms</text>
<rect x="679.5" y="153.6" width="45.2" height="15.4" fill="#000"/>
<text x="702.1" y="163.6" font-family='"DejaVu Sans","Liberation Sans",sans-serif' font-size="12" fill="#cfcfcf" text-anchor="middle" xml:space="preserve">300 ms</text>
<rect x="854.4" y="153.6" width="45.2" height="15.4" fill="#000"/>
<text x="877.0" y="163.6" font-family='"DejaVu Sans","Liberation Sans",sans-serif' font-size="12" fill="#cfcfcf" text-anchor="middle" xml:space="preserve">400 ms</text>
<rect x="1029.3" y="153.6" width="45.2" height="15.4" fill="#000"/>
<text x="1051.9" y="163.6" font-family='"DejaVu Sans","Liberation Sans",sans-serif' font-size="12" fill="#cfcfcf" text-anchor="middle" xml:space="preserve">500 ms</text>
<rect x="1204.2" y="153.6" width="45.2" height="15.4" fill="#000"/>
<text x="1226.8" y="163.6" font-family='"DejaVu Sans","Liberation Sans",sans-serif' font-size="12" fill="#cfcfcf" text-anchor="middle" xml:space="preserve">600 ms</text>
<rect x="1379.1" y="153.6" width="45.2" height="15.4" fill="#000"/>
<text x="1401.7" y="163.6" font-family='"DejaVu Sans","Liberation Sans",sans-serif' font-size="12" fill="#cfcfcf" text-anchor="middle" xml:space="preserve">700 ms</text>
<rect x="1554.0" y="153.6" width="45.2" height="15.4" fill="#000"/>
<text x="1576.6" y="163.6" font-family='"DejaVu Sans","Liberation Sans",sans-serif' font-size="12" fill="#cfcfcf" text-anchor="middle" xml:space="preserve">800 ms</text>
<polygon points="1710,61 1744.3,61 1744.3,95" fill="#575757"/>
<circle cx="1737.4" cy="68" r="3.9" fill="none" stroke="#adadad" stroke-width="1.7"/>
<line x1="1734.3" y1="71.2" x2="1727.8" y2="77.2" stroke="#adadad" stroke-width="2.6" stroke-linecap="round"/>
<polygon points="1730.5,134.3 1742,124 1742,144.6" fill="#ffff3c"/>
<rect x="1741" y="132.8" width="10" height="3.2" fill="#ffff3c"/>
<polygon points="167.9,54 188,54 177.9,63.8" fill="#ff9a22"/>
<path d="M168.9,64.8 H186.9 V84 H181 L177.9,90.2 L174.8,84 H168.9 Z" fill="#000" stroke="#ff9a22" stroke-width="2" stroke-linejoin="miter"/>
<text x="177.8" y="79.9" font-family='"DejaVu Sans","Liberation Sans",sans-serif' font-size="14" fill="#ff9a22" stroke="#ff9a22" stroke-width="0.45" text-anchor="middle">T</text>
</g>
<g shape-rendering="crispEdges" fill="#fff">
<rect x="586" y="33" width="2" height="17"/><rect x="586" y="33" width="7" height="2"/><rect x="586" y="48" width="7" height="2"/>
<rect x="1166" y="33" width="2" height="17"/><rect x="1161" y="33" width="7" height="2"/><rect x="1161" y="48" width="7" height="2"/>
<rect x="588" y="41" width="578" height="2" fill="#cfcfcf"/>
</g>
<polygon points="635.8,29.5 651.4,29.5 643.6,35.3" fill="#ff9a22"/>
<path d="M637.8,37.6 H649.9 V48.8 H646.6 L643.8,53.2 L641,48.8 H637.8 Z" fill="#000" stroke="#ff9a22" stroke-width="1.5"/>
<text x="643.9" y="47.2" font-family='"DejaVu Sans","Liberation Sans",sans-serif' font-size="9.5" font-weight="bold" fill="#ff9a22" text-anchor="middle">T</text>
</svg>
<div class="a" style="left:1759.8px;top:499.5px;width:4.4px;height:4.4px;border-radius:2.2px;background:#dadada"></div>
<div class="a" style="left:1759.8px;top:508.1px;width:4.4px;height:4.4px;border-radius:2.2px;background:#dadada"></div>
<div class="a" style="left:1759.8px;top:516.6999999999999px;width:4.4px;height:4.4px;border-radius:2.2px;background:#dadada"></div>
<div class="a" style="left:1769px;top:26px;width:149px;height:969px;border:1px solid #7a706a;border-left-color:#5f6268;border-right:none;box-sizing:border-box;background:#303030"></div>
<div class="a" style="left:1918px;top:27px;width:1px;height:1053px;background:#242424"></div>
<div class="a" style="left:1919px;top:27px;width:1px;height:1053px;background:#efebe7"></div>
<div class="a" style="left:1918px;top:994px;width:2px;height:1px;background:#7a706a"></div>
<div class="t" style="left:1769px;top:27.8px;width:150px;text-align:center;font-size:14.1px;line-height:17px;font-weight:bold;font-stretch:condensed;will-change:transform;font-family:'DejaVu Sans Condensed','DejaVu Sans',sans-serif;color:#fff">Add New...</div>
<div class="btn" style="left:1776px;top:53px;width:63px;height:37px;will-change:transform"><div class="a" style="left:-1px;width:63px;top:9.43px;font-family:'Liberation Sans','DejaVu Sans',sans-serif;font-size:15.2px;line-height:15.2px;letter-spacing:-0.38px;text-indent:-0.38px;text-align:center;white-space:pre">Cursors</div></div>
<div class="btn" style="left:1847px;top:53px;width:63px;height:37px;will-change:transform"><div class="a" style="left:-1px;width:63px;top:9.13px;font-family:'Liberation Sans','DejaVu Sans',sans-serif;font-size:15.2px;line-height:15.2px;letter-spacing:0.5px;text-indent:0.5px;text-align:center;white-space:pre">Note</div></div>
<div class="btn" style="left:1776px;top:98px;width:63px;height:37px;will-change:transform"><div class="a" style="left:-1px;width:63px;top:9.13px;font-family:'Liberation Sans','DejaVu Sans',sans-serif;font-size:15.2px;line-height:15.2px;letter-spacing:0.17px;text-indent:0.17px;text-align:center;white-space:pre">Measure</div></div>
<div class="btn" style="left:1847px;top:98px;width:63px;height:37px;will-change:transform"><div class="a" style="left:-1px;width:63px;top:9.13px;font-family:'Liberation Sans','DejaVu Sans',sans-serif;font-size:15.2px;line-height:15.2px;letter-spacing:-0.4px;text-indent:-0.4px;text-align:center;white-space:pre">Search</div></div>
<div class="btn" style="left:1776px;top:143px;width:63px;height:37px;will-change:transform"><div class="a" style="left:-1px;width:63px;top:0.70px;font-family:'Liberation Sans','DejaVu Sans',sans-serif;font-size:15px;line-height:15px;letter-spacing:-0.55px;text-indent:-0.55px;text-align:center;white-space:pre">Results</div><div class="a" style="left:-1px;width:63px;top:17.10px;font-family:'Liberation Sans','DejaVu Sans',sans-serif;font-size:15px;line-height:15px;letter-spacing:-0.2px;text-indent:-0.2px;text-align:center;white-space:pre">Table</div></div>
<div class="btn" style="left:1847px;top:143px;width:63px;height:37px;will-change:transform"><div class="a" style="left:-1px;width:63px;top:8.63px;font-family:'Liberation Sans','DejaVu Sans',sans-serif;font-size:15.2px;line-height:15.2px;letter-spacing:0.83px;text-indent:0.83px;text-align:center;white-space:pre">Plot</div></div>
<div class="a" style="left:1773px;top:188.5px;width:145px;height:1px;background:#6b625b"></div>
<div class="badge" style="left:1773px;top:199px;width:145px;height:60px;"><div class="h" style="background:#636366"></div><div class="sh"></div><div class="t" style="left:5.5px;top:2px;line-height:16px;color:#fff;font-size:13.4px">Meas 1</div><svg class="a" style="left:87px;top:4px" width="53" height="12" viewBox="0 0 53 12"><defs><clipPath id="m1"><rect x="0.7" y="0.7" width="50.5" height="10.2" rx="3.4"/></clipPath></defs><rect x="0.4" y="0.4" width="51.1" height="10.8" rx="3.7" fill="#2a1c1c"/><g clip-path="url(#m1)"><rect x="0" y="0" width="53" height="12" fill="#ffff40"/><polygon points="31.2,0 53,0 53,12 21.4,12" fill="#2828e8"/><line x1="31.2" y1="0" x2="21.4" y2="12" stroke="#000" stroke-width="0.9"/></g><text x="10.6" y="9.7" font-family='"DejaVu Sans","Liberation Sans",sans-serif' font-size="10" font-weight="normal" fill="#000" text-anchor="middle">1</text><text x="40.6" y="9.7" font-family='"DejaVu Sans","Liberation Sans",sans-serif' font-size="10" font-weight="normal" fill="#000" text-anchor="middle">6</text></svg><div class="t" style="left:6.6px;top:24.1px;line-height:16px;font-size:13.55px">+12V Bulk Delay</div><div class="t" style="left:7px;top:44.5px;line-height:16px">µ': 63.44 ms</div></div>
<div class="badge" style="left:1773px;top:264px;width:145px;height:60px;"><div class="h" style="background:#636366"></div><div class="sh"></div><div class="t" style="left:5.5px;top:2px;line-height:16px;color:#fff;font-size:13.4px">Meas 2</div><svg class="a" style="left:87px;top:4px" width="53" height="12" viewBox="0 0 53 12"><defs><clipPath id="m2"><rect x="0.7" y="0.7" width="50.5" height="10.2" rx="3.4"/></clipPath></defs><rect x="0.4" y="0.4" width="51.1" height="10.8" rx="3.7" fill="#2a1c1c"/><g clip-path="url(#m2)"><rect x="0" y="0" width="53" height="12" fill="#2828e8"/><polygon points="31.2,0 53,0 53,12 21.4,12" fill="#20f0f4"/><line x1="31.2" y1="0" x2="21.4" y2="12" stroke="#000" stroke-width="0.9"/></g><text x="10.6" y="9.7" font-family='"DejaVu Sans","Liberation Sans",sans-serif' font-size="10" font-weight="normal" fill="#000" text-anchor="middle">6</text><text x="40.6" y="9.7" font-family='"DejaVu Sans","Liberation Sans",sans-serif' font-size="10" font-weight="normal" fill="#000" text-anchor="middle">2</text></svg><div class="t" style="left:6.6px;top:24.1px;line-height:16px;font-size:13.33px">+5V Delay</div><div class="t" style="left:7px;top:44.5px;line-height:16px">µ': 356.9 ms</div></div>
<div class="badge" style="left:1773px;top:329px;width:145px;height:60px;"><div class="h" style="background:#636366"></div><div class="sh"></div><div class="t" style="left:5.5px;top:2px;line-height:16px;color:#fff;font-size:13.4px">Meas 3</div><svg class="a" style="left:87px;top:4px" width="53" height="12" viewBox="0 0 53 12"><defs><clipPath id="m3"><rect x="0.7" y="0.7" width="50.5" height="10.2" rx="3.4"/></clipPath></defs><rect x="0.4" y="0.4" width="51.1" height="10.8" rx="3.7" fill="#2a1c1c"/><g clip-path="url(#m3)"><rect x="0" y="0" width="53" height="12" fill="#20f0f4"/><polygon points="31.2,0 53,0 53,12 21.4,12" fill="#ff3860"/><line x1="31.2" y1="0" x2="21.4" y2="12" stroke="#000" stroke-width="0.9"/></g><text x="10.6" y="9.7" font-family='"DejaVu Sans","Liberation Sans",sans-serif' font-size="10" font-weight="normal" fill="#000" text-anchor="middle">2</text><text x="40.6" y="9.7" font-family='"DejaVu Sans","Liberation Sans",sans-serif' font-size="10" font-weight="normal" fill="#000" text-anchor="middle">3</text></svg><div class="t" style="left:6.6px;top:24.1px;line-height:16px;font-size:13.13px">+5V +3.3V Delay</div><div class="t" style="left:7px;top:44.5px;line-height:16px">µ': 5.741 ms</div></div>
<div class="badge" style="left:1773px;top:394px;width:145px;height:60px;"><div class="h" style="background:#636366"></div><div class="sh"></div><div class="t" style="left:5.5px;top:2px;line-height:16px;color:#fff;font-size:13.4px">Meas 4</div><svg class="a" style="left:87px;top:4px" width="53" height="12" viewBox="0 0 53 12"><defs><clipPath id="m4"><rect x="0.7" y="0.7" width="50.5" height="10.2" rx="3.4"/></clipPath></defs><rect x="0.4" y="0.4" width="51.1" height="10.8" rx="3.7" fill="#2a1c1c"/><g clip-path="url(#m4)"><rect x="0" y="0" width="53" height="12" fill="#20f0f4"/><polygon points="31.2,0 53,0 53,12 21.4,12" fill="#a0f030"/><line x1="31.2" y1="0" x2="21.4" y2="12" stroke="#000" stroke-width="0.9"/></g><text x="10.6" y="9.7" font-family='"DejaVu Sans","Liberation Sans",sans-serif' font-size="10" font-weight="normal" fill="#000" text-anchor="middle">2</text><text x="40.6" y="9.7" font-family='"DejaVu Sans","Liberation Sans",sans-serif' font-size="10" font-weight="normal" fill="#000" text-anchor="middle">4</text></svg><div class="t" style="left:6.6px;top:24.1px;line-height:16px;font-size:13.13px">+5V +2.5V Delay</div><div class="t" style="left:7px;top:44.5px;line-height:16px">µ': 5.460 ms</div></div>
<div class="badge" style="left:1773px;top:459px;width:145px;height:60px;"><div class="h" style="background:#636366"></div><div class="sh"></div><div class="t" style="left:5.5px;top:2px;line-height:16px;color:#fff;font-size:13.4px">Meas 5</div><svg class="a" style="left:87px;top:4px" width="53" height="12" viewBox="0 0 53 12"><defs><clipPath id="m5"><rect x="0.7" y="0.7" width="50.5" height="10.2" rx="3.4"/></clipPath></defs><rect x="0.4" y="0.4" width="51.1" height="10.8" rx="3.7" fill="#2a1c1c"/><g clip-path="url(#m5)"><rect x="0" y="0" width="53" height="12" fill="#20f0f4"/><polygon points="31.2,0 53,0 53,12 21.4,12" fill="#ffa030"/><line x1="31.2" y1="0" x2="21.4" y2="12" stroke="#000" stroke-width="0.9"/></g><text x="10.6" y="9.7" font-family='"DejaVu Sans","Liberation Sans",sans-serif' font-size="10" font-weight="normal" fill="#000" text-anchor="middle">2</text><text x="40.6" y="9.7" font-family='"DejaVu Sans","Liberation Sans",sans-serif' font-size="10" font-weight="normal" fill="#000" text-anchor="middle">5</text></svg><div class="t" style="left:6.6px;top:24.1px;line-height:16px;font-size:13.38px">+5V +5VA Delay</div><div class="t" style="left:7px;top:44.5px;line-height:16px">µ': 0.954 ms</div></div>
<div class="badge" style="left:1773px;top:524px;width:145px;height:60px;"><div class="h" style="background:#636366"></div><div class="sh"></div><div class="t" style="left:5.5px;top:2px;line-height:16px;color:#fff;font-size:13.4px">Meas 6</div><svg class="a" style="left:87px;top:4px" width="53" height="12" viewBox="0 0 53 12"><defs><clipPath id="m6"><rect x="0.7" y="0.7" width="50.5" height="10.2" rx="3.4"/></clipPath></defs><rect x="0.4" y="0.4" width="51.1" height="10.8" rx="3.7" fill="#2a1c1c"/><g clip-path="url(#m6)"><rect x="0" y="0" width="53" height="12" fill="#20f0f4"/><polygon points="31.2,0 53,0 53,12 21.4,12" fill="#ff50c0"/><line x1="31.2" y1="0" x2="21.4" y2="12" stroke="#000" stroke-width="0.9"/></g><text x="10.6" y="9.7" font-family='"DejaVu Sans","Liberation Sans",sans-serif' font-size="10" font-weight="normal" fill="#000" text-anchor="middle">2</text><text x="40.6" y="9.7" font-family='"DejaVu Sans","Liberation Sans",sans-serif' font-size="10" font-weight="normal" fill="#000" text-anchor="middle">7</text></svg><div class="t" style="left:6.6px;top:24.1px;line-height:16px;font-size:13.4px">+5V -5V Delay</div><div class="t" style="left:7px;top:44.5px;line-height:16px">µ': 9.649 ms</div></div>
<div class="badge" style="left:1773px;top:589px;width:145px;height:60px;border-radius:2px 2px 5px 5px;"><div class="h" style="background:#000"></div><div class="sh"></div><div class="t" style="left:6px;top:1.2px;line-height:17px;color:#22e4f0;font-weight:bold;font-size:14px;font-family:'DejaVu Sans Condensed','DejaVu Sans',sans-serif">Meas 7</div><svg class="a" style="left:87px;top:4px" width="53" height="12" viewBox="0 0 53 12"><defs><clipPath id="m7"><rect x="0.7" y="0.7" width="50.5" height="10.2" rx="3.4"/></clipPath></defs><rect x="0.4" y="0.4" width="51.1" height="10.8" rx="3.7" fill="#2a1c1c"/><g clip-path="url(#m7)"><rect x="0" y="0" width="53" height="12" fill="#20f0f4"/><polygon points="31.2,0 53,0 53,12 21.4,12" fill="#00f0a0"/><line x1="31.2" y1="0" x2="21.4" y2="12" stroke="#000" stroke-width="0.9"/></g><text x="10.6" y="9.7" font-family='"DejaVu Sans","Liberation Sans",sans-serif' font-size="9.4" font-weight="bold" fill="#000" text-anchor="middle">2</text><text x="40.6" y="9.7" font-family='"DejaVu Sans","Liberation Sans",sans-serif' font-size="9.4" font-weight="bold" fill="#000" text-anchor="middle">8</text></svg><div class="t" style="left:6.6px;top:24.1px;line-height:16px;font-size:13.4px">+5V -12V Delay</div><div class="t" style="left:7px;top:44.5px;line-height:16px">µ': 9.880 ms</div></div>
<div class="a" style="left:1773px;top:943px;width:145px;height:1px;background:#6b625b"></div>
<div class="btn" style="left:1776px;top:952px;width:63px;height:37px;font-size:14.67px;line-height:35px;"></div>
<svg class="a" style="left:1790px;top:954px" width="36" height="34" viewBox="0 0 36 34">
<g fill="#d4d4d4"><rect x="6" y="4" width="2.2" height="2.2"/><rect x="19" y="4" width="2.2" height="2.2"/><rect x="6" y="17.6" width="2.2" height="2.2"/><rect x="19.4" y="8.6" width="1.8" height="1.8"/><rect x="10.2" y="18" width="1.6" height="1.6"/></g>
<g fill="#8a8a8a"><rect x="10.4" y="4.3" width="1.8" height="1.8"/><rect x="14.8" y="4.3" width="1.8" height="1.8"/><rect x="6.3" y="8.8" width="1.7" height="1.7"/><rect x="6.3" y="13.3" width="1.7" height="1.7"/></g>
<circle cx="19.1" cy="18.3" r="4.9" fill="#8c8c8c" stroke="#e4e4e4" stroke-width="1.6"/>
<line x1="23" y1="22.2" x2="28.4" y2="27.6" stroke="#e4e4e4" stroke-width="3.2" stroke-linecap="round"/>
<line x1="23.6" y1="22.8" x2="28.2" y2="27.4" stroke="#555" stroke-width="1" stroke-linecap="round"/>
</svg>
<svg class="a" style="left:1866px;top:952px" width="34" height="38" viewBox="0 0 34 38">
<g fill="none" stroke="#e8e8e8" stroke-width="1.5">
<ellipse cx="16.5" cy="7.6" rx="12.6" ry="4.6"/>
<path d="M3.9,9.5 L7,31.5 Q16.5,36.5 26,31.5 L29.1,9.5"/>
<path d="M4.6,11.8 Q16.5,17.2 28.4,11.8" stroke-width="1.2"/>
</g>
<g stroke="#d0d0d0" stroke-width="1.3" fill="none"><line x1="16.5" y1="15" x2="16.5" y2="31.5" stroke="#f0f0f0" stroke-width="1.5"/><line x1="10.6" y1="14.6" x2="11.6" y2="31"/><line x1="22.6" y1="14.6" x2="21.6" y2="31"/></g>
<path d="M13.2,5.4 Q16.5,3.6 19.8,5.4" stroke="#d0d0d0" stroke-width="1.3" fill="none"/>
</svg>
<div class="badge" style="left:3px;top:998px;width:90px;height:80px"><div class="h" style="background:#ffff3c"></div><div class="sh"></div><div class="t" style="left:5px;top:1.7px;line-height:16px;color:#14140a;font-size:13.4px">Ch 1</div><div class="t" style="left:7px;top:24px;line-height:16px;font-size:13.55px">1 V/div</div><svg class="a" style="left:7px;top:42px" width="18" height="14" viewBox="0 0 18 14"><g fill="none" stroke="#2a2a2a" stroke-width="1.1"><path d="M2.2,8 C2.2,2.4 6,1.2 7.6,1.2 C10.2,1.2 13.4,3 14,8.2"/><circle cx="7.8" cy="4.1" r="2.5"/><rect x="1" y="7.2" width="2.2" height="4.8" rx="1.1" fill="#f4f4f4"/><rect x="12.4" y="8" width="3.2" height="4.6" rx="0.6" fill="#f4f4f4"/></g></svg><div class="t" style="left:7px;top:61.4px;line-height:16px;font-size:14.5px">5 MHz</div></div>
<div class="badge" style="left:98px;top:998px;width:90px;height:80px"><div class="h" style="background:#1f4849"></div><div class="sh"></div><div class="t" style="left:5px;top:1.7px;line-height:16px;color:#20e4f0;font-size:13.4px">Ch 2</div><div class="t" style="left:7px;top:24px;line-height:16px;font-size:13.55px">1 V/div</div><svg class="a" style="left:7px;top:42px" width="18" height="14" viewBox="0 0 18 14"><g fill="none" stroke="#2a2a2a" stroke-width="1.1"><path d="M2.2,8 C2.2,2.4 6,1.2 7.6,1.2 C10.2,1.2 13.4,3 14,8.2"/><circle cx="7.8" cy="4.1" r="2.5"/><rect x="1" y="7.2" width="2.2" height="4.8" rx="1.1" fill="#f4f4f4"/><rect x="12.4" y="8" width="3.2" height="4.6" rx="0.6" fill="#f4f4f4"/></g></svg><div class="t" style="left:7px;top:61.4px;line-height:16px;font-size:14.5px">5 MHz</div></div>
<div class="badge" style="left:193px;top:998px;width:90px;height:80px"><div class="h" style="background:#4c262f"></div><div class="sh"></div><div class="t" style="left:5px;top:1.7px;line-height:16px;color:#ff3862;font-size:13.4px">Ch 3</div><div class="t" style="left:7px;top:24px;line-height:16px;font-size:13.33px">500 mV/div</div><svg class="a" style="left:7px;top:42px" width="18" height="14" viewBox="0 0 18 14"><g fill="none" stroke="#2a2a2a" stroke-width="1.1"><path d="M2.2,8 C2.2,2.4 6,1.2 7.6,1.2 C10.2,1.2 13.4,3 14,8.2"/><circle cx="7.8" cy="4.1" r="2.5"/><rect x="1" y="7.2" width="2.2" height="4.8" rx="1.1" fill="#f4f4f4"/><rect x="12.4" y="8" width="3.2" height="4.6" rx="0.6" fill="#f4f4f4"/></g></svg><div class="t" style="left:7px;top:61.4px;line-height:16px;font-size:14.5px">5 MHz</div></div>
<div class="badge" style="left:288px;top:998px;width:90px;height:80px"><div class="h" style="background:#3a4922"></div><div class="sh"></div><div class="t" style="left:5px;top:1.7px;line-height:16px;color:#98ea20;font-size:13.4px">Ch 4</div><div class="t" style="left:7px;top:24px;line-height:16px;font-size:13.33px">500 mV/div</div><svg class="a" style="left:7px;top:42px" width="18" height="14" viewBox="0 0 18 14"><g fill="none" stroke="#2a2a2a" stroke-width="1.1"><path d="M2.2,8 C2.2,2.4 6,1.2 7.6,1.2 C10.2,1.2 13.4,3 14,8.2"/><circle cx="7.8" cy="4.1" r="2.5"/><rect x="1" y="7.2" width="2.2" height="4.8" rx="1.1" fill="#f4f4f4"/><rect x="12.4" y="8" width="3.2" height="4.6" rx="0.6" fill="#f4f4f4"/></g></svg><div class="t" style="left:7px;top:61.4px;line-height:16px;font-size:14.5px">5 MHz</div></div>
<div class="badge" style="left:383px;top:998px;width:90px;height:80px"><div class="h" style="background:#553a22"></div><div class="sh"></div><div class="t" style="left:5px;top:1.7px;line-height:16px;color:#ff9a22;font-size:13.4px">Ch 5</div><div class="t" style="left:7px;top:24px;line-height:16px;font-size:13.55px">1 V/div</div><svg class="a" style="left:7px;top:42px" width="18" height="14" viewBox="0 0 18 14"><g fill="none" stroke="#2a2a2a" stroke-width="1.1"><path d="M2.2,8 C2.2,2.4 6,1.2 7.6,1.2 C10.2,1.2 13.4,3 14,8.2"/><circle cx="7.8" cy="4.1" r="2.5"/><rect x="1" y="7.2" width="2.2" height="4.8" rx="1.1" fill="#f4f4f4"/><rect x="12.4" y="8" width="3.2" height="4.6" rx="0.6" fill="#f4f4f4"/></g></svg><div class="t" style="left:7px;top:61.4px;line-height:16px;font-size:14.5px">5 MHz</div></div>
<div class="badge" style="left:478px;top:998px;width:90px;height:80px"><div class="h" style="background:#211f47"></div><div class="sh"></div><div class="t" style="left:5px;top:1.7px;line-height:16px;color:#2a2ae8;font-size:13.4px">Ch 6</div><div class="t" style="left:7px;top:24px;line-height:16px;font-size:13.55px">2 V/div</div><svg class="a" style="left:7px;top:42px" width="18" height="14" viewBox="0 0 18 14"><g fill="none" stroke="#2a2a2a" stroke-width="1.1"><path d="M2.2,8 C2.2,2.4 6,1.2 7.6,1.2 C10.2,1.2 13.4,3 14,8.2"/><circle cx="7.8" cy="4.1" r="2.5"/><rect x="1" y="7.2" width="2.2" height="4.8" rx="1.1" fill="#f4f4f4"/><rect x="12.4" y="8" width="3.2" height="4.6" rx="0.6" fill="#f4f4f4"/></g></svg><div class="t" style="left:7px;top:61.4px;line-height:16px;font-size:14.5px">5 MHz</div></div>
<div class="badge" style="left:573px;top:998px;width:90px;height:80px"><div class="h" style="background:#4a2840"></div><div class="sh"></div><div class="t" style="left:5px;top:1.7px;line-height:16px;color:#ff4cba;font-size:13.4px">Ch 7</div><div class="t" style="left:7px;top:24px;line-height:16px;font-size:13.55px">1 V/div</div><svg class="a" style="left:7px;top:42px" width="18" height="14" viewBox="0 0 18 14"><g fill="none" stroke="#2a2a2a" stroke-width="1.1"><path d="M2.2,8 C2.2,2.4 6,1.2 7.6,1.2 C10.2,1.2 13.4,3 14,8.2"/><circle cx="7.8" cy="4.1" r="2.5"/><rect x="1" y="7.2" width="2.2" height="4.8" rx="1.1" fill="#f4f4f4"/><rect x="12.4" y="8" width="3.2" height="4.6" rx="0.6" fill="#f4f4f4"/></g></svg><div class="t" style="left:7px;top:61.4px;line-height:16px;font-size:14.5px">5 MHz</div></div>
<div class="badge" style="left:668px;top:998px;width:90px;height:80px"><div class="h" style="background:#184a3a"></div><div class="sh"></div><div class="t" style="left:5px;top:1.7px;line-height:16px;color:#00ee9c;font-size:13.4px">Ch 8</div><div class="t" style="left:7px;top:24px;line-height:16px;font-size:13.55px">2 V/div</div><svg class="a" style="left:7px;top:42px" width="18" height="14" viewBox="0 0 18 14"><g fill="none" stroke="#2a2a2a" stroke-width="1.1"><path d="M2.2,8 C2.2,2.4 6,1.2 7.6,1.2 C10.2,1.2 13.4,3 14,8.2"/><circle cx="7.8" cy="4.1" r="2.5"/><rect x="1" y="7.2" width="2.2" height="4.8" rx="1.1" fill="#f4f4f4"/><rect x="12.4" y="8" width="3.2" height="4.6" rx="0.6" fill="#f4f4f4"/></g></svg><div class="t" style="left:7px;top:61.4px;line-height:16px;font-size:14.5px">5 MHz</div></div>
<div class="a" style="left:983px;top:998px;width:1px;height:80px;background:#5c554f"></div>
<div class="a" style="left:1134px;top:998px;width:1px;height:80px;background:#5c554f"></div>
<div class="a" style="left:1245px;top:998px;width:1px;height:80px;background:#5c554f"></div>
<div class="btn" style="left:994px;top:998px;width:40px;height:80px;border-radius:7px;font-size:14.67px;line-height:16px"><div class="a" style="left:3px;top:7px;width:32px;height:2px;background:#ff9a22;border-radius:1px"></div><div class="a" style="left:-6px;width:50px;top:17px;text-align:center">Add<br>New<br>Math</div></div>
<div class="btn" style="left:1039px;top:998px;width:40px;height:80px;border-radius:7px;font-size:14.67px;line-height:16px"><div class="a" style="left:3px;top:7px;width:32px;height:2px;background:#dcdcf2;border-radius:1px"></div><div class="a" style="left:-6px;width:50px;top:17px;text-align:center">Add<br>New<br>Ref</div></div>
<div class="btn" style="left:1084px;top:998px;width:40px;height:80px;border-radius:7px;font-size:14.67px;line-height:16px"><div class="a" style="left:3px;top:7px;width:32px;height:2px;background:#ee66ff;border-radius:1px"></div><div class="a" style="left:-6px;width:50px;top:17px;text-align:center">Add<br>New<br>Bus</div></div>
<div class="btn" style="left:1145px;top:998px;width:40px;height:80px;border-radius:7px;font-size:14.67px;line-height:16px"><div class="a" style="left:3px;top:7px;width:32px;height:2px;background:#555557;border-radius:1px"></div><div class="a" style="left:-6px;width:50px;top:33px;text-align:center">DVM</div></div>
<div class="btn" style="left:1195px;top:998px;width:40px;height:80px;border-radius:7px;font-size:14.67px;line-height:16px"><div class="a" style="left:3px;top:7px;width:32px;height:2px;background:#555557;border-radius:1px"></div><div class="a" style="left:-6px;width:50px;top:33px;text-align:center">AFG</div></div>
<div class="badge" style="left:1256px;top:998px;width:225px;height:80px"><div class="h" style="background:#636366"></div><div class="sh"></div><div class="t" style="left:5px;top:0.5px;font-size:14.6px;line-height:18px;color:#fff">Horizontal</div><div class="t" style="left:7px;top:24px;line-height:16px;font-size:13.15px">100 ms/div</div><div class="t" style="left:113px;top:24px;line-height:16px">1 s</div><div class="t" style="left:7px;top:43.3px;line-height:16px;font-size:13.12px">SR: 12.5 MS/s</div><div class="t" style="left:112.5px;top:43.3px;line-height:16px">80 ns/pt</div><div class="t" style="left:7px;top:62.4px;line-height:16px;font-size:13.65px">RL: 12.5 Mpts</div><div class="t" style="left:132.5px;top:62.5px;line-height:16px">10%</div><svg class="a" style="left:112px;top:62px" width="11" height="14" viewBox="0 0 11 14"><path d="M1.4,1.4 H9.2 V8.6 H7 L5.3,11.6 L3.6,8.6 H1.4 Z" fill="#000" stroke="#ff9a22" stroke-width="1.3"/><text x="5.3" y="7.8" font-family='"DejaVu Sans","Liberation Sans",sans-serif' font-size="7.2" font-weight="bold" fill="#fff" stroke="#fff" stroke-width="0.3" text-anchor="middle">T</text></svg></div>
<div class="badge" style="left:1491px;top:998px;width:160px;height:80px"><div class="h" style="background:#636366"></div><div class="sh"></div><div class="t" style="left:6px;top:1px;font-size:13.7px;line-height:17px;color:#fff">Trigger</div><div class="a" style="left:7px;top:23.6px;width:28.5px;height:15px;border:1px solid #111;border-radius:5px;background:#ffff3c;text-align:center;font-size:13.33px;line-height:15px;color:#111">1</div><svg class="a" style="left:46px;top:25px" width="20" height="14" viewBox="0 0 20 14"><polyline points="1,12.5 5.5,12.5 12.5,2.5 17,2.5" fill="none" stroke="#3c2f86" stroke-width="1.1"/></svg><div class="t" style="left:72.5px;top:24.4px;line-height:16px;font-size:13.8px">2 V</div></div>
<div class="badge" style="left:1661px;top:998px;width:150px;height:80px"><div class="h" style="background:#636366"></div><div class="sh"></div><div class="t" style="left:5px;top:1px;font-size:14.1px;line-height:17px;color:#fff">Acquisition</div><div class="t" style="left:6.8px;top:24.3px;line-height:16px">Auto,</div><div class="t" style="left:66px;top:24.3px;line-height:16px;font-size:13.8px">Analyze</div><div class="t" style="left:6.8px;top:43.1px;line-height:16px;font-size:13.5px">High Res: 16 bits</div><div class="t" style="left:6.8px;top:62px;line-height:16px">Single: 1/1</div></div>
<div class="a" style="left:1821px;top:998px;width:90px;height:36px;box-sizing:border-box;border:1px solid #7d8888;border-radius:7px;background:#ff2029;color:#fff;font-weight:bold;font-family:'DejaVu Sans Condensed','DejaVu Sans',sans-serif;font-size:12.6px;line-height:31px;text-align:center">Stopped</div>
</body></html>
